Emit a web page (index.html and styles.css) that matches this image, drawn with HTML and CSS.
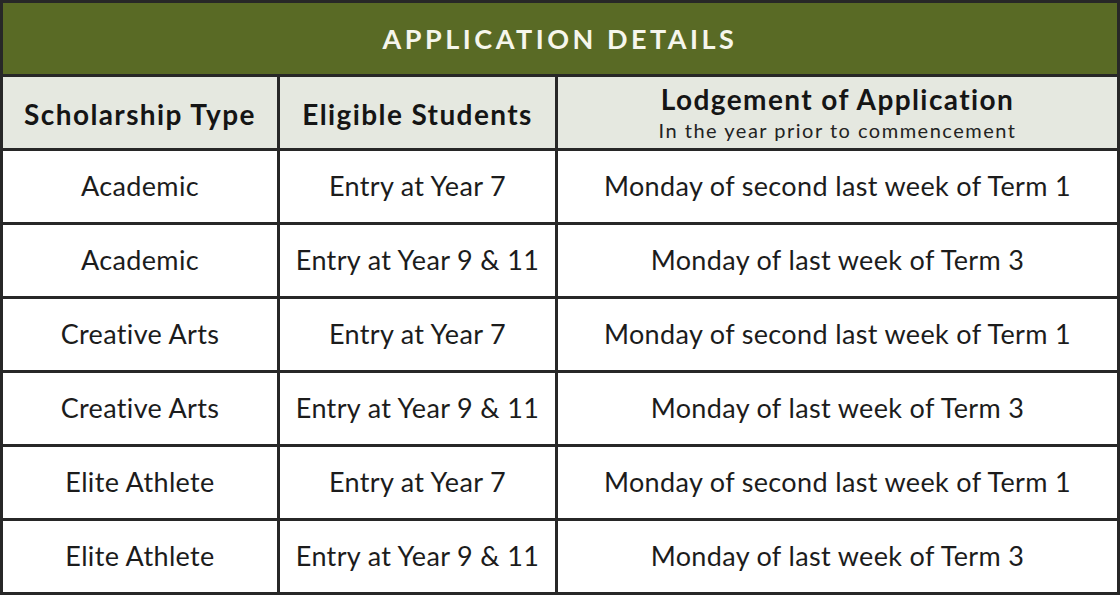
FILE: index.html
```html
<!DOCTYPE html>
<html lang="en">
<head>
<meta charset="utf-8">
<title>Application Details</title>
<link rel="stylesheet" href="styles.css">
</head>
<body>
<div class="sheet">
  <div class="title">APPLICATION DETAILS</div>
  <div class="head">Scholarship Type</div>
  <div class="head">Eligible Students</div>
  <div class="head head-stack"><span class="head-main">Lodgement of Application</span><span class="head-sub">In the year prior to commencement</span></div>

  <div class="cell">Academic</div>
  <div class="cell">Entry at Year 7</div>
  <div class="cell">Monday of second last week of Term 1</div>

  <div class="cell">Academic</div>
  <div class="cell">Entry at Year 9 &amp; 11</div>
  <div class="cell">Monday of last week of Term 3</div>

  <div class="cell">Creative Arts</div>
  <div class="cell">Entry at Year 7</div>
  <div class="cell">Monday of second last week of Term 1</div>

  <div class="cell">Creative Arts</div>
  <div class="cell">Entry at Year 9 &amp; 11</div>
  <div class="cell">Monday of last week of Term 3</div>

  <div class="cell">Elite Athlete</div>
  <div class="cell">Entry at Year 7</div>
  <div class="cell">Monday of second last week of Term 1</div>

  <div class="cell">Elite Athlete</div>
  <div class="cell">Entry at Year 9 &amp; 11</div>
  <div class="cell">Monday of last week of Term 3</div>
</div>
</body>
</html>
```
FILE: styles.css
```css
html, body {
  margin: 0;
  padding: 0;
  background: #ffffff;
}
body {
  font-family: "Lato", "Open Sans", sans-serif;
  color: #1c1c1c;
}
.sheet {
  width: 1120px;
  height: 595px;
  box-sizing: border-box;
  padding: 3px;
  gap: 3px;
  background: #272727;
  display: grid;
  grid-template-columns: 274px 275px 559px;
  grid-template-rows: 71px 71px repeat(6, 71px);
}
.title {
  grid-column: 1 / -1;
  background: #596a25;
  color: #f6f6ec;
  font-weight: 700;
  font-size: 27px;
  letter-spacing: 3.5px;
  display: flex;
  align-items: center;
  justify-content: center;
}
.head {
  background: #e5e8e0;
  font-weight: 700;
  font-size: 28px;
  letter-spacing: 1.4px;
  color: #151515;
  display: flex;
  align-items: center;
  justify-content: center;
  padding-top: 2px;
}
.head-stack {
  flex-direction: column;
  line-height: 1.15;
  padding-top: 0;
}
.head-sub {
  font-weight: 400;
  font-size: 20px;
  letter-spacing: 1.5px;
  color: #222;
  margin-top: 3px;
}
.cell {
  background: #ffffff;
  font-size: 27px;
  letter-spacing: 0.35px;
  display: flex;
  align-items: center;
  justify-content: center;
  padding-bottom: 2px;
}
```
